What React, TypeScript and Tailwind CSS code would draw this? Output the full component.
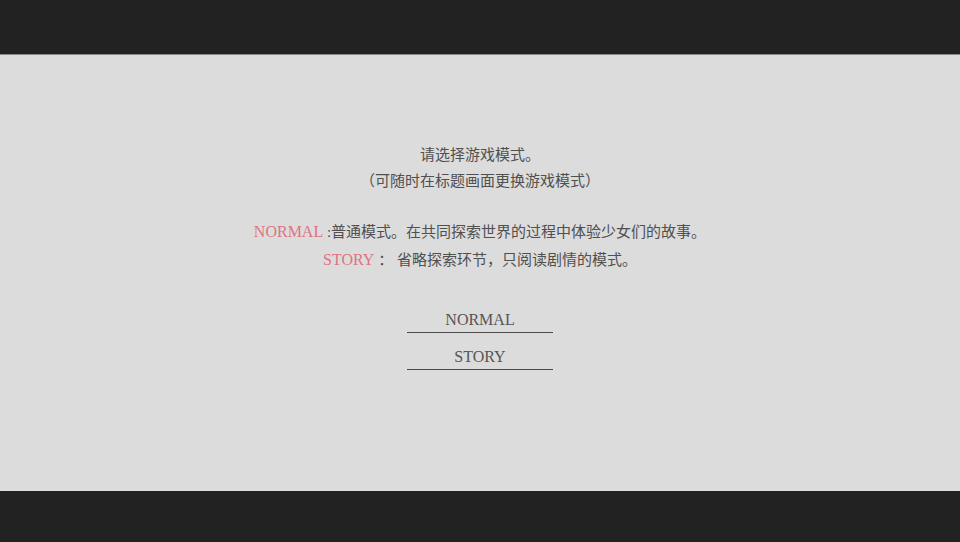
const serif = { fontFamily: '"Liberation Serif", "Noto Sans CJK SC", serif' };

function ModeButton({ label }: { label: string }) {
  return (
    <button
      type="button"
      className="w-[146px] h-[37px] flex items-end justify-center border-b border-[#4a4a4a] pb-[2px] text-[16px] leading-[20px] text-[#555555]"
    >
      {label}
    </button>
  );
}

export default function App() {
  return (
    <div className="w-[960px] h-[542px] flex flex-col bg-[#222222]" style={serif}>
      <div className="h-[54px] bg-[#222222]" />
      <main className="flex-1 flex flex-col items-center bg-[#dcdcdc] border-t border-[#8a8a8a] pt-[87px] text-[#505050]">
        <p className="text-[15px] leading-[26px]">请选择游戏模式。</p>
        <p className="text-[15px] leading-[26px]">（可随时在标题画面更换游戏模式）</p>

        <div className="mt-[24px] flex flex-col items-center text-[15px] leading-[27px]">
          <p>
            <span className="text-[16px] text-[#e07382]">NORMAL</span>
            <span> :普通模式。在共同探索世界的过程中体验少女们的故事。</span>
          </p>
          <p>
            <span className="text-[16px] text-[#e07382]">STORY</span>
            <span> ： 省略探索环节，只阅读剧情的模式。</span>
          </p>
        </div>

        <div className="mt-[22px] flex flex-col items-center">
          <ModeButton label="NORMAL" />
          <ModeButton label="STORY" />
        </div>
      </main>
      <div className="h-[51px] bg-[#222222]" />
    </div>
  );
}
